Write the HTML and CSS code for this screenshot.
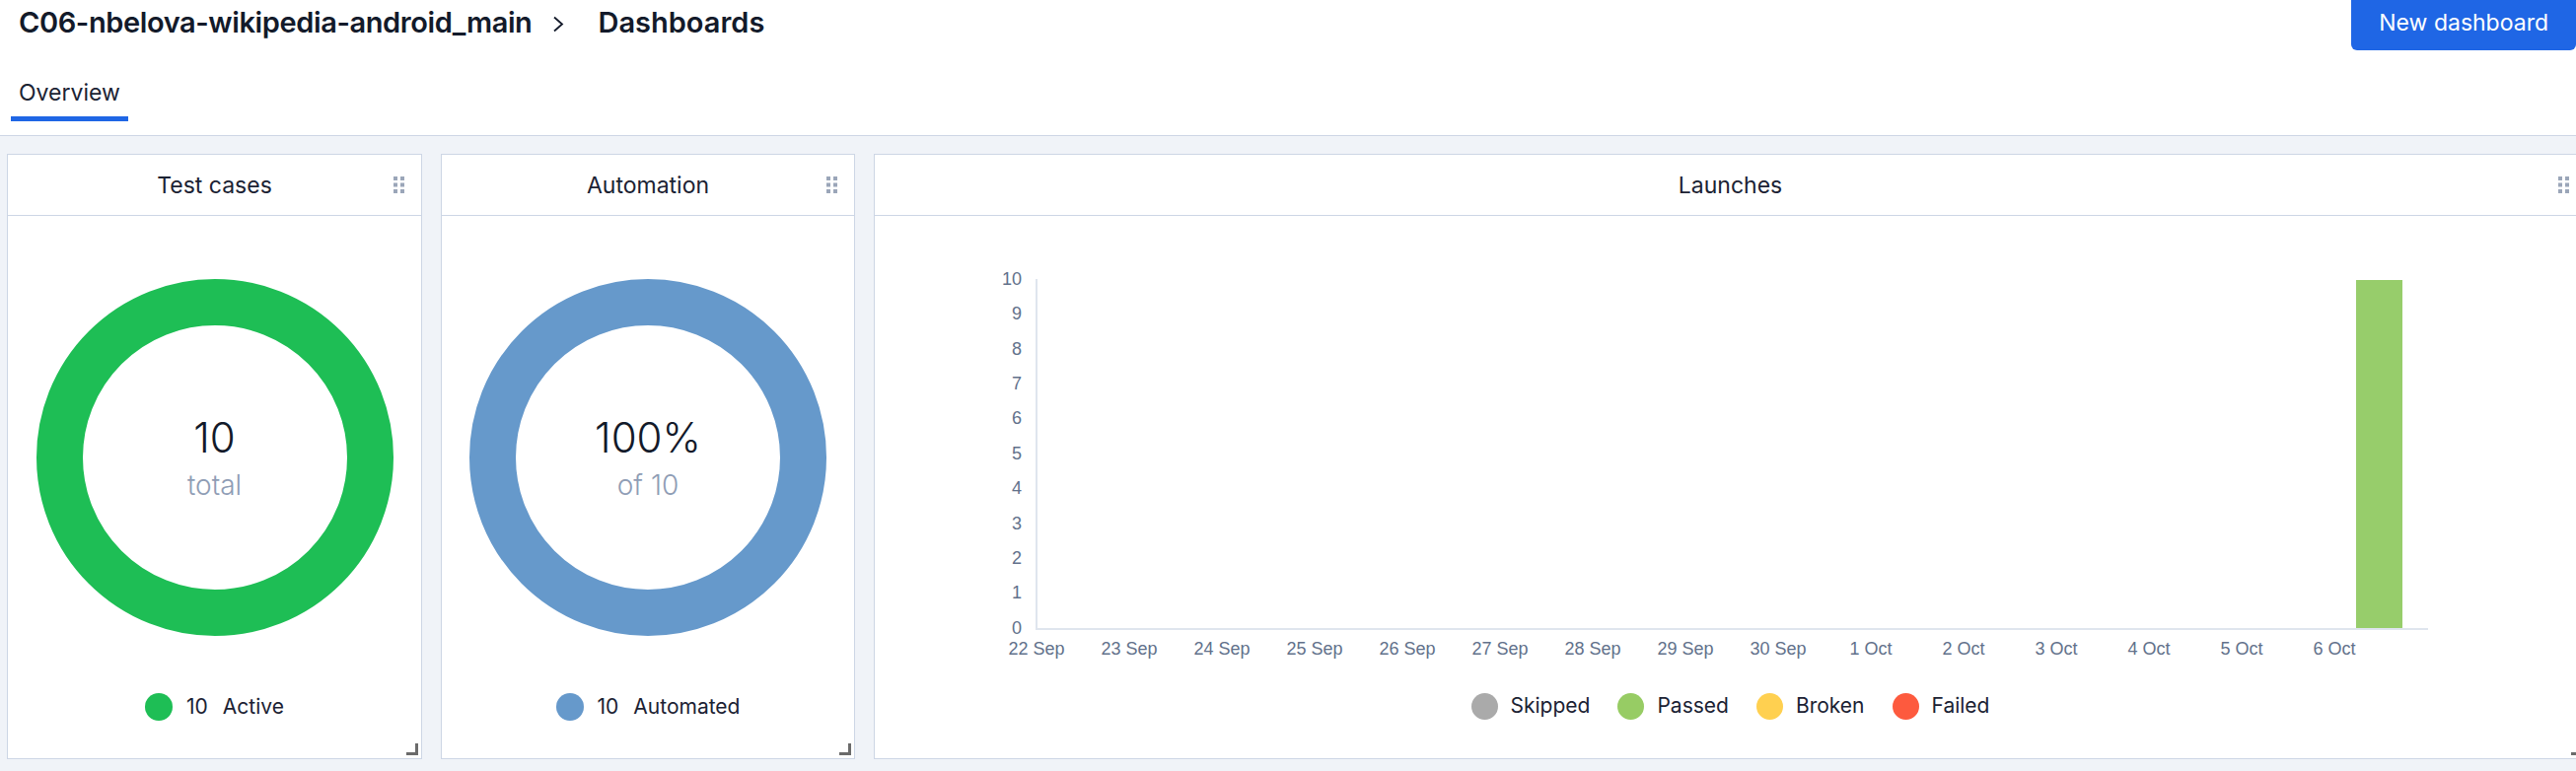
FILE: index.html
```html
<!DOCTYPE html>
<html lang="en">
<head>
<meta charset="utf-8">
<title>Dashboards</title>
<link rel="stylesheet" href="styles.css">
</head>
<body>
<div class="app">
  <header class="topbar">
    <div class="titlebar">
      <h1 class="crumbs">
        <span class="crumb">C06-nbelova-wikipedia-android_main</span>
        <svg class="chev" width="12" height="17" viewBox="0 0 12 17"><polyline points="2,1.5 10,8.5 2,15.5" fill="none" stroke="#131a2a" stroke-width="1.8"/></svg>
        <span class="crumb crumb-last">Dashboards</span>
      </h1>
      <button class="btn-primary" type="button">New dashboard</button>
    </div>
    <nav class="tabs"><a class="tab active">Overview</a></nav>
  </header>

  <main class="board">
    <section class="widget">
      <div class="widget-head">
        <h2 class="widget-title">Test cases</h2>
        <svg class="drag" width="11" height="17" viewBox="0 0 11 17"><rect x="0" y="0" width="4" height="4"/><rect x="7" y="0" width="4" height="4"/><rect x="0" y="6.5" width="4" height="4"/><rect x="7" y="6.5" width="4" height="4"/><rect x="0" y="13" width="4" height="4"/><rect x="7" y="13" width="4" height="4"/></svg>
      </div>
      <div class="widget-body donut-body">
        <div class="donut donut-green">
          <div class="donut-label"><span class="big">10</span><span class="sub">total</span></div>
        </div>
        <div class="legend">
          <span class="legend-item"><span class="dot dot-green"></span><span class="num">10</span><span>Active</span></span>
        </div>
      </div>
      <span class="resize"></span>
    </section>

    <section class="widget">
      <div class="widget-head">
        <h2 class="widget-title">Automation</h2>
        <svg class="drag" width="11" height="17" viewBox="0 0 11 17"><rect x="0" y="0" width="4" height="4"/><rect x="7" y="0" width="4" height="4"/><rect x="0" y="6.5" width="4" height="4"/><rect x="7" y="6.5" width="4" height="4"/><rect x="0" y="13" width="4" height="4"/><rect x="7" y="13" width="4" height="4"/></svg>
      </div>
      <div class="widget-body donut-body">
        <div class="donut donut-blue">
          <div class="donut-label"><span class="big">100%</span><span class="sub">of 10</span></div>
        </div>
        <div class="legend">
          <span class="legend-item"><span class="dot dot-blue"></span><span class="num">10</span><span>Automated</span></span>
        </div>
      </div>
      <span class="resize"></span>
    </section>

    <section class="widget">
      <div class="widget-head">
        <h2 class="widget-title">Launches</h2>
        <svg class="drag" width="11" height="17" viewBox="0 0 11 17"><rect x="0" y="0" width="4" height="4"/><rect x="7" y="0" width="4" height="4"/><rect x="0" y="6.5" width="4" height="4"/><rect x="7" y="6.5" width="4" height="4"/><rect x="0" y="13" width="4" height="4"/><rect x="7" y="13" width="4" height="4"/></svg>
      </div>
      <div class="widget-body chart-body">
        <svg class="chart" width="1735" height="483" viewBox="0 0 1735 483">
          <g class="ylabels" text-anchor="end">
            <text x="149" y="65">10</text>
            <text x="149" y="100.4">9</text>
            <text x="149" y="135.8">8</text>
            <text x="149" y="171.2">7</text>
            <text x="149" y="206.6">6</text>
            <text x="149" y="242">5</text>
            <text x="149" y="277.4">4</text>
            <text x="149" y="312.8">3</text>
            <text x="149" y="348.2">2</text>
            <text x="149" y="383.6">1</text>
            <text x="149" y="419">0</text>
          </g>
          <rect class="bar-passed" x="1502" y="65" width="47" height="353"/>
          <line class="axis" x1="164" y1="64" x2="164" y2="420"/>
          <line class="axis" x1="163" y1="419" x2="1575" y2="419"/>
          <g class="xlabels" text-anchor="middle">
            <text x="164" y="440">22 Sep</text>
            <text x="258" y="440">23 Sep</text>
            <text x="352" y="440">24 Sep</text>
            <text x="446" y="440">25 Sep</text>
            <text x="540" y="440">26 Sep</text>
            <text x="634" y="440">27 Sep</text>
            <text x="728" y="440">28 Sep</text>
            <text x="822" y="440">29 Sep</text>
            <text x="916" y="440">30 Sep</text>
            <text x="1010" y="440">1 Oct</text>
            <text x="1104" y="440">2 Oct</text>
            <text x="1198" y="440">3 Oct</text>
            <text x="1292" y="440">4 Oct</text>
            <text x="1386" y="440">5 Oct</text>
            <text x="1480" y="440">6 Oct</text>
          </g>
        </svg>
        <div class="legend legend-wide">
          <span class="legend-item"><span class="dot dot-skipped"></span><span>Skipped</span></span>
          <span class="legend-item"><span class="dot dot-passed"></span><span>Passed</span></span>
          <span class="legend-item"><span class="dot dot-broken"></span><span>Broken</span></span>
          <span class="legend-item"><span class="dot dot-failed"></span><span>Failed</span></span>
        </div>
      </div>
      <span class="resize"></span>
    </section>
  </main>
</div>
</body>
</html>
```

FILE: styles.css
```css
html, body {
  margin: 0;
  padding: 0;
  overflow: hidden;
  background: #f0f3f8;
}

body {
  font-family: Inter, "Noto Sans", "Liberation Sans", sans-serif;
  color: #1b2233;
}

.app {
  width: 2630px;
}

/* ---------- header ---------- */
.topbar {
  background: #ffffff;
  border-bottom: 1px solid #cdd6e5;
}

.titlebar {
  display: flex;
  justify-content: space-between;
  align-items: flex-start;
  height: 51px;
  padding: 0 18px 0 19px;
}

.crumbs {
  margin: 0;
  display: flex;
  align-items: center;
  gap: 21px;
  font-size: 29px;
  font-weight: 600;
  line-height: 46px;
  color: #131a2a;
  letter-spacing: -0.4px;
}

.crumb-last {
  margin-left: 13px;
  letter-spacing: 0;
}

.chev {
  display: block;
  margin-top: 3px;
}

.btn-primary {
  margin-top: -5px;
  height: 56px;
  padding: 0 28px;
  border: none;
  border-radius: 6px;
  background: #1f66e5;
  color: #ffffff;
  font-family: Inter, "Noto Sans", sans-serif;
  font-size: 23px;
  font-weight: 400;
  line-height: 56px;
}

.tabs {
  display: flex;
  padding: 19px 0 14px 11px;
}

.tab {
  display: block;
  padding: 0 8px;
  font-size: 23px;
  line-height: 48px;
  color: #1b2333;
  border-bottom: 5px solid #1f66e5;
}

/* ---------- board ---------- */
.board {
  display: grid;
  grid-template-columns: 421px 420px 1737px;
  gap: 19px;
  padding: 18px 7px 0 7px;
}

.widget {
  position: relative;
  box-sizing: border-box;
  height: 614px;
  background: #ffffff;
  border: 1px solid #cdd6e5;
  display: flex;
  flex-direction: column;
}

.widget-head {
  display: grid;
  grid-template-columns: 1fr auto 1fr;
  align-items: center;
  height: 61px;
  padding: 0 17px;
  border-bottom: 1px solid #cdd6e5;
}

.widget-title {
  grid-column: 2;
  margin: 0;
  font-size: 23px;
  font-weight: 400;
  color: #1b2233;
}

.drag {
  grid-column: 3;
  justify-self: end;
  display: block;
  fill: #9ba6b9;
}

.widget-body {
  flex: 1;
  display: flex;
  flex-direction: column;
  align-items: center;
}

.donut-body {
  padding-top: 64px;
}

.donut {
  box-sizing: border-box;
  width: 362px;
  height: 362px;
  border-radius: 50%;
  border: 47px solid;
  display: flex;
  align-items: center;
  justify-content: center;
}

.donut-green { border-color: #1ebe55; }
.donut-blue { border-color: #6699cb; }

.donut-label {
  display: flex;
  flex-direction: column;
  align-items: center;
  padding-top: 6px;
}

.big {
  font-size: 42px;
  font-weight: 300;
  line-height: 50px;
  color: #131a2a;
}

.sub {
  font-size: 28px;
  font-weight: 300;
  line-height: 46px;
  color: #8f9db5;
}

.legend {
  display: flex;
  justify-content: center;
  gap: 30px;
  margin-top: 58px;
  height: 28px;
  font-size: 21px;
  line-height: 28px;
  color: #1b2233;
}

.legend-wide {
  margin-top: 0;
  gap: 28px;
}

.legend-item {
  display: flex;
  align-items: center;
  gap: 14px;
}

.legend-wide .legend-item {
  gap: 13px;
}

.num {
  margin-right: 1px;
}

.dot {
  width: 28px;
  height: 28px;
  border-radius: 50%;
  flex: none;
}

.legend-wide .dot {
  width: 27px;
  height: 27px;
}

.dot-green { background: #1ebe55; }
.dot-blue { background: #6699cb; }
.dot-skipped { background: #aaaaaa; }
.dot-passed { background: #97cc64; }
.dot-broken { background: #ffd050; }
.dot-failed { background: #fd5a3e; }

.chart {
  display: block;
}

.chart text {
  font-family: "Liberation Sans", Arial, sans-serif;
  font-size: 18px;
  fill: #62718b;
  dominant-baseline: middle;
}

.axis {
  stroke: #dfe5ee;
  stroke-width: 2;
}

.bar-passed {
  fill: #97cd6b;
}

.resize {
  position: absolute;
  right: 3px;
  bottom: 3px;
  width: 12px;
  height: 12px;
  box-sizing: border-box;
  border-right: 3px solid #6b6b6b;
  border-bottom: 3px solid #6b6b6b;
}
```
